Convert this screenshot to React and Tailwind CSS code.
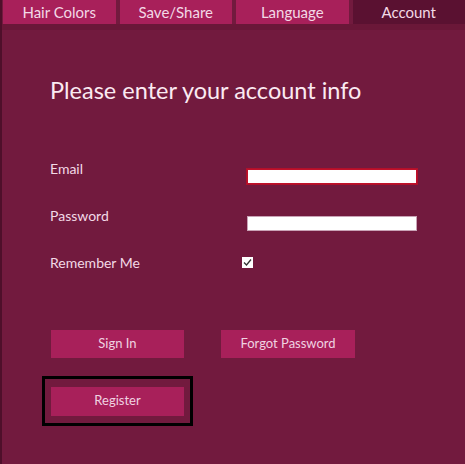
import { useState } from 'react'

const tabs = ['Hair Colors', 'Save/Share', 'Language', 'Account']

function App() {
  const [active, setActive] = useState('Account')
  const [email, setEmail] = useState('')
  const [password, setPassword] = useState('')
  const [remember, setRemember] = useState(true)

  return (
    <div className="w-[465px] h-[464px] bg-[#721a3e] border-l-2 border-[#4e0f2a] overflow-hidden text-[#f3d9e6]" style={{ fontFamily: 'Lato, "Open Sans", sans-serif' }}>
      {/* Tabs */}
      <div className="flex gap-1 pl-px h-6 border-b-[6px] border-[#6a1738] box-content">
        {tabs.map(t => (
          <button
            key={t}
            onClick={() => setActive(t)}
            className={`w-[113px] h-6 text-[15px] leading-6 text-center ${active === t ? 'bg-[#5a1131]' : 'bg-[#a8205a]'}`}
          >
            {t}
          </button>
        ))}
      </div>

      <div className="pl-12 pt-[46px]">
        <h1 className="text-[23.5px] leading-7 text-[#fbeaf2]">Please enter your account info</h1>

        <div className="mt-[55px] flex flex-col">
          <div className="flex items-start h-[47px]">
            <label className="w-[197px] text-[14px] leading-5">Email</label>
            <input
              type="email"
              value={email}
              onChange={e => setEmail(e.target.value)}
              className="mt-[10px] w-[170px] h-[15px] bg-white border border-[#c0102a] shadow-[0_0_0_1px_#b0102a] outline-none text-black text-xs"
            />
          </div>
          <div className="flex items-start h-[47px]">
            <label className="w-[197px] text-[14px] leading-5">Password</label>
            <input
              type="password"
              value={password}
              onChange={e => setPassword(e.target.value)}
              className="mt-[10px] w-[170px] h-[15px] bg-white border border-[#c9a3b6] outline-none text-black text-xs"
            />
          </div>
          <div className="flex items-start h-5">
            <label className="w-[192px] text-[14px] leading-5">Remember Me</label>
            <button
              onClick={() => setRemember(!remember)}
              className="mt-[4px] w-[11px] h-[11px] bg-white flex items-center justify-center"
            >
              {remember && (
                <svg width="9" height="9" viewBox="0 0 9 9">
                  <path d="M1 4.5 L3.5 7 L8 1.5" fill="none" stroke="#333" strokeWidth="1.3" />
                </svg>
              )}
            </button>
          </div>
        </div>

        <div className="mt-[57px] flex gap-[37px] pl-px">
          <button className="w-[133px] h-7 bg-[#a8205a] text-[13px] text-[#f0d2e1]">Sign In</button>
          <button className="w-[134px] h-7 bg-[#a8205a] text-[13px] text-[#f0d2e1]">Forgot Password</button>
        </div>

        <div className="mt-[18px] -ml-2 w-[151px] h-[50px] border-[3px] border-black flex items-center justify-center">
          <button className="w-[133px] h-[29px] bg-[#a8205a] text-[13px] text-[#f0d2e1]">Register</button>
        </div>
      </div>
    </div>
  )
}

export default App
